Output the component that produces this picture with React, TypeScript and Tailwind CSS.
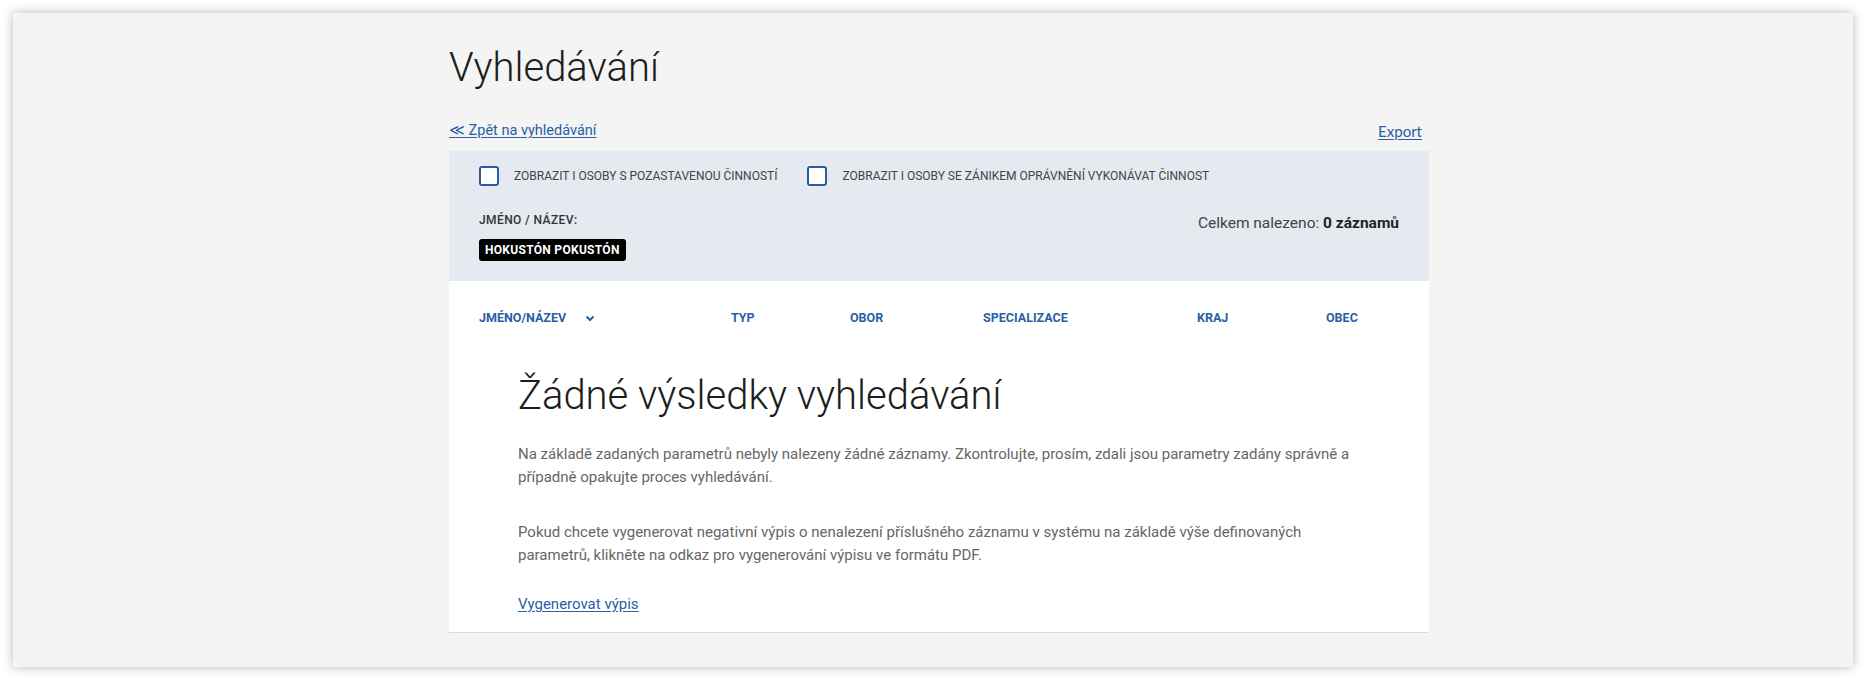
import React from 'react';

const columns = ['TYP', 'OBOR', 'SPECIALIZACE', 'KRAJ', 'OBEC'];

function Checkbox({ label }: { label: string }) {
  return (
    <label className="flex items-center gap-[15px] cursor-pointer">
      <span className="w-5 h-5 rounded-[3px] border-2 border-[#2b5c9e] bg-white" />
      <span className="text-[12px] leading-5 text-[#444]">{label}</span>
    </label>
  );
}

function Chevron() {
  return (
    <svg width="10" height="7" viewBox="0 0 10 7" className="ml-[19px]">
      <path d="M1.5 1.5 L5 5 L8.5 1.5" fill="none" stroke="#2a5fa5" strokeWidth="2" />
    </svg>
  );
}

export default function App() {
  return (
    <div className="w-[1867px] h-[681px] bg-white pt-[13px] pl-[13px]" style={{ fontFamily: 'Roboto, "Noto Sans", sans-serif' }}>
      <div className="w-[1840px] h-[654px] bg-[#f4f4f4] shadow-[0_0_10px_rgba(0,0,0,0.28)] overflow-hidden">
        <div className="w-[980px] ml-[436px]">
          {/* Title */}
          <h1 className="mt-[30px] text-[40px] leading-[50px] font-light text-[#1d1d1d]">Vyhledávání</h1>

          {/* Links */}
          <div className="mt-[28px] flex items-center justify-between pr-[7px]">
            <a href="#" className="text-[14.5px] leading-5 text-[#2a5fa5] underline underline-offset-2">≪ Zpět na vyhledávání</a>
            <a href="#" className="text-[15px] leading-5 text-[#2a5fa5] underline underline-offset-2" style={{ fontFamily: 'Lato, sans-serif' }}>Export</a>
          </div>

          {/* Filters */}
          <div className="mt-[10px] bg-[#e5e9f0] px-[30px] pt-[15px] pb-[20px]">
            <div className="flex items-center gap-[30px]">
              <Checkbox label="ZOBRAZIT I OSOBY S POZASTAVENOU ČINNOSTÍ" />
              <Checkbox label="ZOBRAZIT I OSOBY SE ZÁNIKEM OPRÁVNĚNÍ VYKONÁVAT ČINNOST" />
            </div>
            <div className="mt-[26px] flex items-start justify-between">
              <div>
                <div className="text-[12px] leading-4 font-medium tracking-[0.4px] text-[#333]">JMÉNO / NÁZEV:</div>
                <span className="mt-[11px] inline-flex items-center h-[22px] px-[6px] rounded-[3px] bg-black text-white text-[12px] font-bold tracking-[0.3px]">
                  HOKUSTÓN POKUSTÓN
                </span>
              </div>
              <div className="mt-[1px] text-[15.5px] leading-5 text-[#444]">
                Celkem nalezeno: <span className="font-bold text-[#222]">0 záznamů</span>
              </div>
            </div>
          </div>

          {/* Results */}
          <div className="bg-white border-b border-[#dcdcdc]">
            <div className="grid grid-cols-[252px_119px_133px_214px_129px_1fr] px-[30px] pt-[29px] text-[12.5px] leading-4 font-bold text-[#2a5fa5]">
              <div className="flex items-center">
                JMÉNO/NÁZEV
                <Chevron />
              </div>
              {columns.map((c) => (
                <div key={c}>{c}</div>
              ))}
            </div>

            <div className="px-[69px] pb-[16px]">
              <h2 className="mt-[48px] text-[40px] leading-[44px] font-light text-[#1d1d1d]">Žádné výsledky vyhledávání</h2>
              <p className="mt-[25px] text-[15px] leading-[23px] text-[#666]">
                Na základě zadaných parametrů nebyly nalezeny žádné záznamy. Zkontrolujte, prosím, zdali jsou parametry zadány správně a případně opakujte proces vyhledávání.
              </p>
              <p className="mt-[32px] text-[15px] leading-[23px] text-[#666]">
                Pokud chcete vygenerovat negativní výpis o nenalezení příslušného záznamu v systému na základě výše definovaných parametrů, klikněte na odkaz pro vygenerování výpisu ve formátu PDF.
              </p>
              <a href="#" className="mt-[26px] inline-block text-[15px] leading-[23px] text-[#2a5fa5] underline underline-offset-2">Vygenerovat výpis</a>
            </div>
          </div>
        </div>
      </div>
    </div>
  );
}
